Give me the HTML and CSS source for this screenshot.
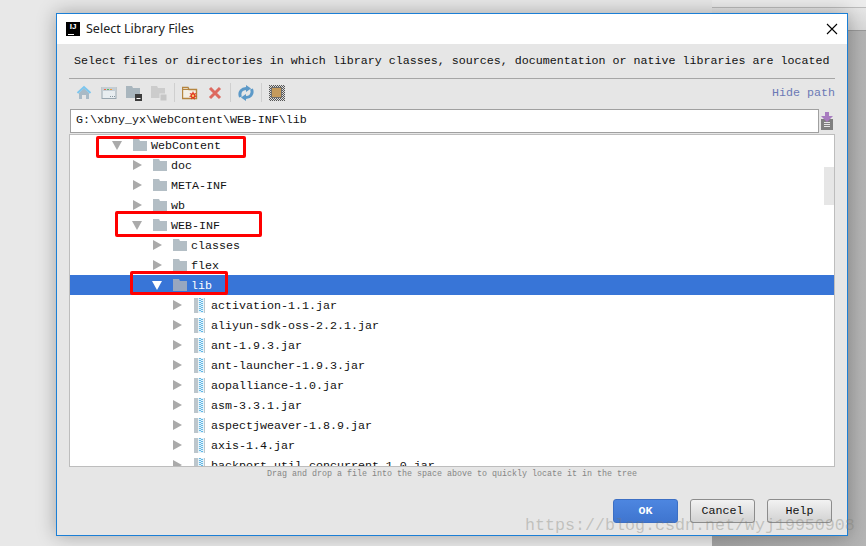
FILE: index.html
```html
<!DOCTYPE html>
<html lang="en">

<head>
    <meta charset="UTF-8">
    <title>Select Library Files</title>
    <link rel="stylesheet" href="styles.css">
</head>

<body>
    <svg class="defs" width="0" height="0">
        <symbol id="arrow-right" viewBox="0 0 9 10"><path d="M0 0 9 5 0 10Z" /></symbol>
        <symbol id="arrow-down" viewBox="0 0 10 9"><path d="M0 0H10L5 9Z" /></symbol>
        <symbol id="folder" viewBox="0 0 14 12"><path d="M0 0H6L7 2H14V12H0Z" /></symbol>
        <symbol id="jar" viewBox="0 0 11 15">
            <rect width="11" height="15" fill="#bcc6cc" />
            <rect x="4" width="6" height="15" fill="#e4f3fb" />
            <path d="M5 0H7V1H5ZM7 1H9V2H7ZM5 2H7V3H5ZM7 3H9V4H7ZM5 4H7V5H5ZM7 5H9V6H7ZM5 6H7V7H5ZM7 7H9V8H7ZM5 8H7V9H5ZM7 9H9V10H7ZM5 10H7V11H5ZM7 11H9V12H7ZM5 12H7V13H5ZM7 13H9V14H7Z" fill="#62b8e6" />
        </symbol>
        <pattern id="checks" width="2" height="2" patternUnits="userSpaceOnUse">
            <rect width="2" height="2" fill="#ddd" />
            <rect width="1" height="1" fill="#555" />
            <rect x="1" y="1" width="1" height="1" fill="#555" />
        </pattern>
    </svg>

    <div class="back_window">
        <div class="back_top"></div>
    </div>

    <div class="dialog">
        <div class="title_bar">
            <span class="app_icon"><span>IJ</span></span>
            <span class="title_text">Select Library Files</span>
            <svg class="close_icon" width="12" height="12" viewBox="0 0 12 12"><path d="M1 1 11 11M11 1 1 11" /></svg>
        </div>

        <div class="body">
            <p class="message">Select files or directories in which library classes, sources, documentation or native libraries are located</p>

            <div class="toolbar">
                <span class="tool"><svg width="16" height="16" viewBox="0 0 16 16">
                        <path d="M8 3 13 8V14H10V10H6V14H3V8Z" fill="#a9bac6" />
                        <path d="M1.500 8 8 2 14.500 8" fill="none" stroke="#7cc6ee" stroke-width="2" />
                    </svg></span>
                <span class="tool"><svg width="16" height="16" viewBox="0 0 16 16">
                        <rect x="1" y="2.500" width="14" height="11" fill="#e8edf0" stroke="#9aa7b0" />
                        <rect x="1" y="2" width="14" height="4" fill="#c5ced4" />
                        <path d="M3 4H5V5H3Z" fill="#e86a50" />
                        <path d="M6 4H8V5H6Z" fill="#5cb85c" />
                        <path d="M9 4H11V5H9Z" fill="#e89a40" />
                        <path d="M9 11H10V12H9ZM11 11H12V12H11ZM13 11H14V12H13Z" fill="#8a979f" />
                    </svg></span>
                <span class="tool"><svg width="16" height="16" viewBox="0 0 16 16">
                        <path d="M0 1H6L7 3H14V13H0Z" fill="#a9b6be" />
                        <rect x="9" y="9" width="7" height="7" fill="#3c3c3c" />
                        <rect x="10.500" y="13" width="4" height="1" fill="#fff" />
                    </svg></span>
                <span class="tool"><svg width="16" height="16" viewBox="0 0 16 16">
                        <path d="M0 1H6L7 3H14V13H0Z" fill="#cccccc" />
                        <rect x="9" y="9" width="7" height="7" fill="#c6c6c6" stroke="#e6e6e6" />
                    </svg></span>
                <span class="sep"></span>
                <span class="tool"><svg width="16" height="16" viewBox="0 0 16 16">
                        <path d="M.5 2.500H6L7 4.500H14.500V13.500H.5Z" fill="#f4efe4" stroke="#b5853f" stroke-width="1.400" />
                        <path d="M.5 4.500H14.500" stroke="#b5853f" />
                        <path d="M11 6 12 8.500 14.500 8 13 10 15 11.500 12.800 12 12.500 15 11 13 9 14.500 9.300 12 7 11.500 9 10 7.500 8 10 8.500Z" fill="#e0341c" />
                        <circle cx="11" cy="10.800" r="1.200" fill="#f8d070" />
                    </svg></span>
                <span class="tool"><svg width="16" height="16" viewBox="0 0 16 16">
                        <path d="M3 3 13 13M13 3 3 13" stroke="#dd6a60" stroke-width="3" />
                    </svg></span>
                <span class="sep"></span>
                <span class="tool"><svg width="16" height="16" viewBox="0 0 16 16">
                        <path d="M2.500 12C0.500 7 4 3 9 3.500" fill="none" stroke="#5c99c8" stroke-width="3" />
                        <path d="M8 0 13 3.500 8 7Z" fill="#5c99c8" />
                        <path d="M13.500 4C15.500 9 12 13 7 12.500" fill="none" stroke="#5c99c8" stroke-width="3" />
                        <path d="M8 9 3 12.500 8 16Z" fill="#5c99c8" />
                    </svg></span>
                <span class="sep"></span>
                <span class="tool"><svg width="16" height="16" viewBox="0 0 16 16">
                        <rect width="16" height="16" fill="url(#checks)" />
                        <rect x="2.500" y="2.500" width="10" height="10" fill="#c49a5c" stroke="#6e6e6e" />
                    </svg></span>
                <a class="hide_path">Hide path</a>
            </div>

            <div class="path_row">
                <div class="path_input">G:\xbny_yx\WebContent\WEB-INF\lib</div>
                <svg class="path_icon" width="12" height="18" viewBox="0 0 12 18">
                    <path d="M0 7H12V18H0Z" fill="#7f7f7f" />
                    <path d="M3 10H9V11H3ZM3 12H9V13H3ZM3 14H9V15H3Z" fill="#e6e6e6" />
                    <path d="M4 0H8V4H12L6 10 0 4H4Z" fill="#a87cc0" />
                </svg>
            </div>

            <div class="tree">
                <div class="row"><svg class="arrow down"><use href="#arrow-down" /></svg><svg class="folder"><use href="#folder" /></svg><span>WebContent</span></div>
                <div class="row d1"><svg class="arrow"><use href="#arrow-right" /></svg><svg class="folder"><use href="#folder" /></svg><span>doc</span></div>
                <div class="row d1"><svg class="arrow"><use href="#arrow-right" /></svg><svg class="folder"><use href="#folder" /></svg><span>META-INF</span></div>
                <div class="row d1"><svg class="arrow"><use href="#arrow-right" /></svg><svg class="folder"><use href="#folder" /></svg><span>wb</span></div>
                <div class="row d1"><svg class="arrow down"><use href="#arrow-down" /></svg><svg class="folder"><use href="#folder" /></svg><span>WEB-INF</span></div>
                <div class="row d2"><svg class="arrow"><use href="#arrow-right" /></svg><svg class="folder"><use href="#folder" /></svg><span>classes</span></div>
                <div class="row d2"><svg class="arrow"><use href="#arrow-right" /></svg><svg class="folder"><use href="#folder" /></svg><span>flex</span></div>
                <div class="row d2 selected"><svg class="arrow down"><use href="#arrow-down" /></svg><svg class="folder"><use href="#folder" /></svg><span>lib</span></div>
                <div class="row d3"><svg class="arrow"><use href="#arrow-right" /></svg><svg class="jar"><use href="#jar" /></svg><span>activation-1.1.jar</span></div>
                <div class="row d3"><svg class="arrow"><use href="#arrow-right" /></svg><svg class="jar"><use href="#jar" /></svg><span>aliyun-sdk-oss-2.2.1.jar</span></div>
                <div class="row d3"><svg class="arrow"><use href="#arrow-right" /></svg><svg class="jar"><use href="#jar" /></svg><span>ant-1.9.3.jar</span></div>
                <div class="row d3"><svg class="arrow"><use href="#arrow-right" /></svg><svg class="jar"><use href="#jar" /></svg><span>ant-launcher-1.9.3.jar</span></div>
                <div class="row d3"><svg class="arrow"><use href="#arrow-right" /></svg><svg class="jar"><use href="#jar" /></svg><span>aopalliance-1.0.jar</span></div>
                <div class="row d3"><svg class="arrow"><use href="#arrow-right" /></svg><svg class="jar"><use href="#jar" /></svg><span>asm-3.3.1.jar</span></div>
                <div class="row d3"><svg class="arrow"><use href="#arrow-right" /></svg><svg class="jar"><use href="#jar" /></svg><span>aspectjweaver-1.8.9.jar</span></div>
                <div class="row d3"><svg class="arrow"><use href="#arrow-right" /></svg><svg class="jar"><use href="#jar" /></svg><span>axis-1.4.jar</span></div>
                <div class="row d3"><svg class="arrow"><use href="#arrow-right" /></svg><svg class="jar"><use href="#jar" /></svg><span>backport-util-concurrent-1.0.jar</span></div>
                <div class="scroll_thumb"></div>
            </div>

            <p class="hint">Drag and drop a file into the space above to quickly locate it in the tree</p>

            <div class="buttons">
                <button class="btn ok_btn">OK</button>
                <button class="btn">Cancel</button>
                <button class="btn">Help</button>
            </div>
        </div>
    </div>

    <!-- annotations drawn over the screenshot -->
    <div class="mark mark_1"></div>
    <div class="mark mark_2"></div>
    <div class="mark mark_3"></div>
    <div class="watermark">https://blog.csdn.net/wyj19950908</div>
</body>

</html>
```

FILE: styles.css
```css
* {
    margin: 0;
    padding: 0;
    box-sizing: border-box;
}

html,
body {
    height: 100%;
}

body {
    position: relative;
    overflow: hidden;
    background: #e8e8e8;
    font-family: "Liberation Mono", monospace;
    font-size: 11.67px;
    color: #111;
}

.defs {
    position: absolute;
}

.back_window {
    position: absolute;
    top: 0;
    right: 0;
    bottom: 0;
    width: 154px;
    background: linear-gradient(90deg, #a4a4a4, #b4b4b4);
}

.back_top {
    height: 31px;
    background: linear-gradient(#ececec 7px, #bcbcbc 7px, #bcbcbc 8px, #e6e6e6 8px, #d8d8d8 30px, #999 30px);
}

.dialog {
    position: absolute;
    left: 56px;
    top: 13px;
    width: 792px;
    height: 523px;
    display: flex;
    flex-direction: column;
    background: #e6e6e6;
    border: 1px solid #1b7fd6;
    box-shadow: 0 0 18px rgba(0, 0, 0, 0.3);
}

.title_bar {
    height: 30px;
    flex: none;
    display: flex;
    align-items: center;
    padding: 0 9px;
    background: #fff;
}

.app_icon {
    width: 14px;
    height: 14px;
    background: #000;
    position: relative;
    font: bold 8px/10px "Liberation Sans", sans-serif;
    color: #fff;
    text-align: center;
}

.app_icon::after {
    content: "";
    position: absolute;
    left: 2px;
    bottom: 1px;
    width: 6px;
    height: 1px;
    background: #fff;
}

.app_icon span {
    display: block;
}

.title_text {
    margin-left: 6px;
    padding-bottom: 2px;
    font: 12.5px "Noto Sans", sans-serif;
    color: #222;
}

.close_icon {
    margin-left: auto;
}

.close_icon path {
    stroke: #000;
    stroke-width: 1.1;
    fill: none;
}

.body {
    flex: 1;
    padding: 0 12px;
}

.message {
    height: 35px;
    line-height: 34px;
    padding-left: 5px;
    white-space: nowrap;
    border-bottom: 1px solid #a6a6a6;
}

.toolbar {
    height: 27px;
    margin-bottom: 3px;
    display: flex;
    align-items: center;
    padding-left: 2px;
}

.tool {
    width: 25px;
    height: 18px;
    display: flex;
    align-items: center;
    justify-content: center;
}

.sep {
    width: 1px;
    height: 19px;
    margin: 0 2px 0 3px;
    background: #cfcfcf;
}

.hide_path {
    margin-left: auto;
    color: #6b79b5;
}

.path_row {
    display: flex;
    align-items: center;
    gap: 2px;
    padding-left: 1px;
    height: 24px;
}

.path_input {
    width: 749px;
    height: 24px;
    line-height: 21px;
    padding-left: 5px;
    background: #fff;
    border: 1px solid #a0a0a0;
}

.tree {
    position: relative;
    height: 333px;
    margin-top: 1px;
    background: #fff;
    border: 1px solid #bdbdbd;
    overflow: hidden;
}

.row {
    height: 20px;
    display: flex;
    align-items: center;
    padding-left: 43px;
    white-space: nowrap;
}

.row span {
    padding-top: 2px;
}

.d1 {
    padding-left: 63px;
}

.d2 {
    padding-left: 83px;
}

.d3 {
    padding-left: 103px;
}

.arrow {
    width: 9px;
    height: 10px;
    margin-right: 11px;
    fill: #aaa;
    flex: none;
}

.arrow.down {
    width: 10px;
    height: 9px;
    margin-left: -1px;
    margin-right: 11px;
}

.folder {
    width: 14px;
    height: 12px;
    margin-right: 4px;
    fill: #b3bec5;
    flex: none;
}

.jar {
    width: 11px;
    height: 15px;
    margin-right: 6px;
    margin-left: 1px;
    flex: none;
}

.selected {
    background: #3875d7;
    color: #fff;
}

.selected .arrow {
    fill: #fff;
}

.selected .folder {
    fill: #98a7bf;
}

.scroll_thumb {
    position: absolute;
    top: 32px;
    right: 0;
    width: 10px;
    height: 38px;
    background: #e6e6e6;
}

.hint {
    height: 12px;
    font-size: 8.33px;
    line-height: 15px;
    text-align: center;
    color: #858585;
}

.buttons {
    display: flex;
    justify-content: flex-end;
    gap: 12px;
    margin-top: 20px;
    padding-right: 3px;
}

.btn {
    width: 65px;
    height: 24px;
    font: inherit;
    color: #111;
    background: linear-gradient(#f2f2f2, #d2d2d2);
    border: 1px solid #8c8c8c;
    border-radius: 3px;
}

.ok_btn {
    font-weight: bold;
    color: #fff;
    background: linear-gradient(#4d86e0, #3f75cf);
    border-color: #3c6fc4;
}

.mark {
    position: absolute;
    border: 3px solid #f00;
    border-radius: 2px;
}

.mark_1 {
    left: 96px;
    top: 136px;
    width: 150px;
    height: 22px;
}

.mark_2 {
    left: 115px;
    top: 211px;
    width: 147px;
    height: 26px;
}

.mark_3 {
    left: 130px;
    top: 271px;
    width: 98px;
    height: 24px;
}

.watermark {
    position: absolute;
    left: 525px;
    top: 516px;
    font-size: 16.67px;
    color: rgba(120, 120, 110, 0.35);
    white-space: nowrap;
}
```
